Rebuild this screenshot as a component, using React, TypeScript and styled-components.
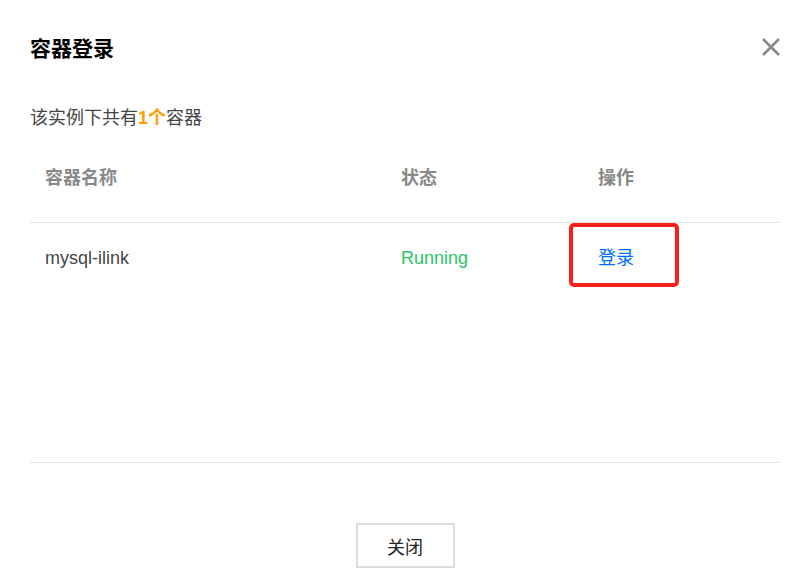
import React from "react";
import styled, { createGlobalStyle } from "styled-components";

const Global = createGlobalStyle`
  html, body { margin: 0; padding: 0; background: #fff; }
  body { font-family: "Liberation Sans", "Noto Sans CJK SC", sans-serif; }
  * { box-sizing: border-box; }
`;

const Dialog = styled.div`
  width: 800px;
  height: 581px;
  padding: 30px 20px 0 30px;
  display: flex;
  flex-direction: column;
  overflow: hidden;
`;

const Header = styled.div`
  height: 38px;
  display: flex;
  align-items: center;
  justify-content: space-between;
`;

const Title = styled.h2`
  margin: 0;
  font-size: 21px;
  line-height: 24px;
  font-weight: 700;
  color: #000;
`;

const CloseIcon = styled.button`
  width: 20px;
  height: 20px;
  padding: 0;
  margin-right: -1px;
  margin-top: -5px;
  border: 0;
  background: none;
  display: flex;
  align-items: center;
  justify-content: center;
  cursor: pointer;
`;

const Subtitle = styled.p`
  margin: 38px 0 0;
  font-size: 18px;
  line-height: 24px;
  color: #444;
`;

const Count = styled.b`
  color: #ff9c00;
  font-weight: 700;
`;

const Body = styled.div`
  height: 333px;
  border-bottom: 1px solid #e2e2e2;
`;

const Table = styled.table`
  width: 100%;
  border-collapse: collapse;
  table-layout: fixed;
`;

const Th = styled.th<{ $w?: number }>`
  width: ${(p) => (p.$w ? `${p.$w}px` : "auto")};
  padding: 36px 15px 32px;
  text-align: left;
  font-size: 18px;
  line-height: 24px;
  font-weight: 700;
  color: #888;
  border-bottom: 1px solid #e2e2e2;
`;

const Td = styled.td`
  position: relative;
  padding: 23px 15px;
  font-size: 18px;
  line-height: 24px;
  color: #444;
`;

const Status = styled.span`
  color: #29c468;
`;

const Link = styled.a`
  color: #006eff;
  text-decoration: none;
  cursor: pointer;
`;

const Highlight = styled.div`
  position: absolute;
  left: -14px;
  top: 0;
  width: 110px;
  height: 64px;
  border: 4px solid #f5221b;
  border-radius: 5px;
  pointer-events: none;
`;

const Footer = styled.div`
  padding-top: 60px;
  display: flex;
  justify-content: center;
`;

const Button = styled.button`
  width: 99px;
  height: 45px;
  border: 2px solid #dcdcdc;
  background: #fff;
  font-family: "Liberation Sans", "Noto Sans CJK SC", sans-serif;
  font-size: 18px;
  color: #222;
  cursor: pointer;
`;

export default function App() {
  return (
    <>
      <Global />
      <Dialog>
        <Header>
          <Title>容器登录</Title>
          <CloseIcon aria-label="close">
            <svg width="20" height="20" viewBox="0 0 20 20">
              <path d="M2 2 L18 18 M18 2 L2 18" stroke="#888" strokeWidth="2.6" fill="none" />
            </svg>
          </CloseIcon>
        </Header>
        <Subtitle>
          该实例下共有<Count>1个</Count>容器
        </Subtitle>
        <Body>
          <Table>
            <thead>
              <tr>
                <Th $w={356}>容器名称</Th>
                <Th $w={197}>状态</Th>
                <Th>操作</Th>
              </tr>
            </thead>
            <tbody>
              <tr>
                <Td>mysql-ilink</Td>
                <Td>
                  <Status>Running</Status>
                </Td>
                <Td>
                  <Link>登录</Link>
                  <Highlight />
                </Td>
              </tr>
            </tbody>
          </Table>
        </Body>
        <Footer>
          <Button>关闭</Button>
        </Footer>
      </Dialog>
    </>
  );
}
